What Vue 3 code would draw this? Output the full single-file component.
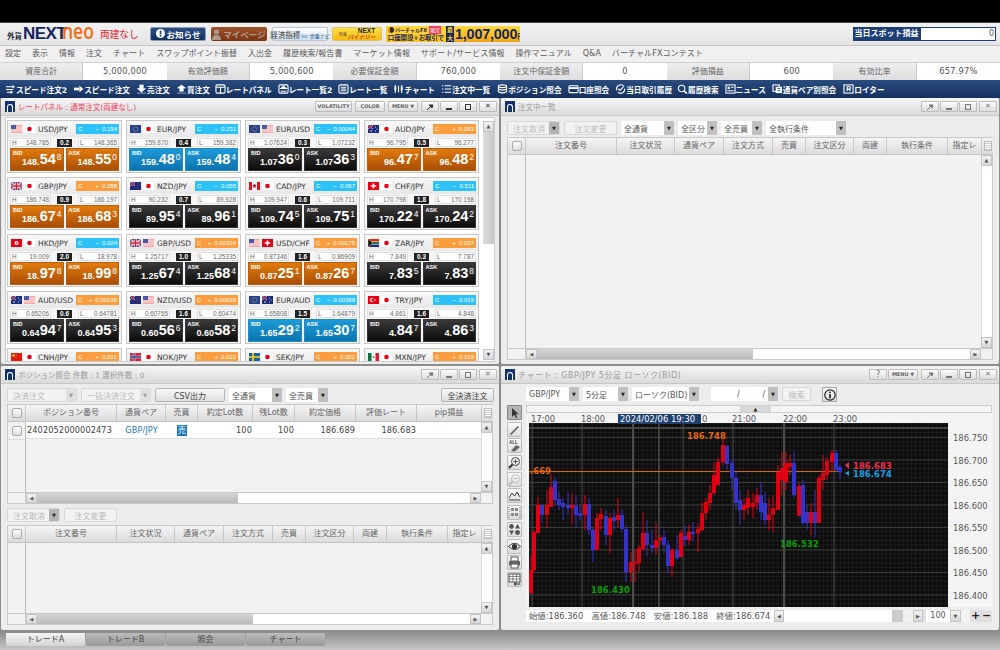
<template>
    <div class="app">
        <div class="topblack"></div>

        <div class="header">
            <div class="logo">
                <span class="logo-small">外貨</span><span class="logo-next">NEXT</span><span class="logo-neo">neo</span>
            </div>
            <span class="logo-mode">両建なし</span>
            <div class="hbtn hbtn-info">
                <svg width="9" height="10" viewBox="0 0 9 10"><circle cx="4.5" cy="4.5" r="4.5" fill="#fff" /><rect x="3.7" y="1.5" width="1.6" height="4" fill="#1c3f78" /><rect x="3.7" y="6.2" width="1.6" height="1.5" fill="#1c3f78" /></svg>
                お知らせ
            </div>
            <div class="hbtn hbtn-my">
                <svg width="9" height="11" viewBox="0 0 9 11"><circle cx="4.5" cy="3" r="2.6" fill="#a89a90" /><path d="M0 11 Q0 6 4.5 6 Q9 6 9 11 Z" fill="#a89a90" /></svg>
                マイページ
            </div>
            <div class="hbtn hbtn-eco"><b>経済指標</b><small>for 慎重ナビ</small></div>
            <div class="hbtn hbtn-bin"><small>外貨</small><div class="bin-text"><span>NEXT</span><i>バイナリー</i></div></div>
            <div class="banner">
                <div class="banner-left">
                    <div class="banner-top"><span class="banner-dot"></span><i>バーチャルFX</i><em>限定</em></div>
                    <div class="banner-bottom">口座開設+お取引で</div>
                </div>
                <div class="banner-max">最大</div>
                <div class="banner-num">1,007,000<small>円</small></div>
            </div>
            <div class="spot">
                <span class="spot-label">当日スポット損益</span>
                <span class="spot-val">0</span>
            </div>
        </div>

        <div class="menu">
            <span v-for="m in menus" :key="m">{{ m }}</span>
        </div>

        <div class="stats">
            <template v-for="s in stats" :key="s[0]">
                <div class="stat-label">{{ s[0] }}</div>
                <div class="stat-val">{{ s[1] }}</div>
            </template>
        </div>

        <div class="toolbar">
            <div class="tool-item" v-for="t in tools" :key="t.name" :style="{ marginLeft: t.gap + 'px' }">
                <svg width="11" height="10" viewBox="0 0 12 11" v-html="t.icon"></svg>
                <span>{{ t.name }}</span>
            </div>
        </div>

        <div class="workspace">
            <!-- rate panel -->
            <section class="panel">
                <div class="title">
                    <span class="win-icon"><i></i></span>
                    <span class="title-text red">レートパネル : 通常注文(両建なし)</span>
                    <div class="title-btns">
                        <span class="tbtn txt w37">VOLATILITY</span>
                        <span class="tbtn txt w30">COLOR</span>
                        <span class="tbtn txt w30">MENU ▼</span>
                        <span class="tbtn"><svg width="8" height="8" viewBox="0 0 8 8"><path d="M1 7 L4 4 M3 2 L6 5 L7 2 Z" stroke="#333" fill="#333" /></svg></span>
                        <span class="tbtn"><i class="ic-min"></i></span>
                        <span class="tbtn"><i class="ic-max"></i></span>
                        <span class="tbtn close-x">✕</span>
                    </div>
                </div>
                <div class="rate-body">
                    <div class="rate-grid">
                        <div class="card" v-for="c in cards" :key="c.pair">
                            <div class="card-head">
                                <svg class="flag" viewBox="0 0 22 16" v-html="flags[c.f1]"></svg>
                                <svg class="flag" viewBox="0 0 22 16" v-html="flags[c.f2]"></svg>
                                <span class="pair">{{ c.pair }}</span>
                                <span class="chg" :class="c.up ? 'chg-up' : 'chg-down'">
                                    <span>C</span><span class="chg-sign">{{ c.up ? '+' : '−' }}</span><span>{{ c.chg }}</span>
                                </span>
                            </div>
                            <div class="hl">
                                <span class="hl-box"><b>H</b>{{ c.h }}</span>
                                <span class="spread">{{ c.sp }}</span>
                                <span class="hl-box"><b>L</b>{{ c.l }}</span>
                            </div>
                            <div class="quotes">
                                <div class="quote" :class="c.color" v-for="(q, i) in [c.bid, c.ask]" :key="i">
                                    <span class="q-label">{{ i === 0 ? 'BID' : 'ASK' }}</span>
                                    <div class="q-price">
                                        <span class="q-a">{{ q[0] }}</span><span class="q-b">{{ q[1] }}</span><span class="q-c">{{ q[2] }}</span>
                                    </div>
                                </div>
                            </div>
                        </div>
                    </div>
                    <div class="rate-scroll">
                        <span class="arrow-btn">▲</span>
                        <span class="rate-thumb"></span>
                        <span class="rate-track"></span>
                        <span class="arrow-btn">▼</span>
                    </div>
                </div>
            </section>

            <!-- order list panel -->
            <section class="panel">
                <div class="title">
                    <span class="win-icon"><i></i></span>
                    <span class="title-text">注文中一覧</span>
                    <div class="title-btns dim">
                        <span class="tbtn"><svg width="8" height="8" viewBox="0 0 8 8"><path d="M1 7 L4 4 M3 2 L6 5 L7 2 Z" stroke="#777" fill="#777" /></svg></span>
                        <span class="tbtn"><i class="ic-min"></i></span>
                        <span class="tbtn"><i class="ic-max"></i></span>
                        <span class="tbtn close-x">✕</span>
                    </div>
                </div>
                <div class="pad">
                    <div class="row-tools">
                        <span class="btn off split w53">注文取消<i class="drop dark">▼</i></span>
                        <span class="btn off w53">注文変更</span>
                        <span class="sel w53">全通貨<i>▼</i></span>
                        <span class="sel w39">全区分<i>▼</i></span>
                        <span class="sel w41">全売買<i>▼</i></span>
                        <span class="sel w80">全執行条件<i>▼</i></span>
                    </div>
                    <div class="tbl tall">
                        <div class="tbl-head">
                            <span class="tc first"><i class="check"></i></span>
                            <span class="tc" v-for="c in orderCols" :key="c[0]" :style="{ width: c[1] + 'px' }">{{ c[0] }}</span>
                            <span class="tc corner"><i class="lines"></i></span>
                        </div>
                        <div class="tbl-main">
                            <div class="tbl-left"></div>
                            <div class="tbl-rows"></div>
                            <div class="vscroll"><span class="arrow-btn">▲</span><span class="v-track"></span><span class="arrow-btn">▼</span></div>
                        </div>
                        <div class="hscroll">
                            <span class="h-blank"></span><span class="arrow-btn">◀</span>
                            <span class="h-thumb" style="width: 216px"></span><span class="h-track"></span>
                            <span class="arrow-btn">▶</span><span class="h-end"></span>
                        </div>
                    </div>
                </div>
            </section>

            <!-- position + order panel -->
            <section class="panel">
                <div class="title">
                    <span class="win-icon"><i></i></span>
                    <span class="title-text">ポジション照会 件数 : 1 選択件数 : 0</span>
                    <div class="title-btns dim">
                        <span class="tbtn"><svg width="8" height="8" viewBox="0 0 8 8"><path d="M1 7 L4 4 M3 2 L6 5 L7 2 Z" stroke="#777" fill="#777" /></svg></span>
                        <span class="tbtn"><i class="ic-min"></i></span>
                        <span class="tbtn"><i class="ic-max"></i></span>
                        <span class="tbtn close-x">✕</span>
                    </div>
                </div>
                <div class="pad tight">
                    <div class="row-tools">
                        <span class="btn off split w70">決済注文<i class="drop">▼</i></span>
                        <span class="btn off split w70">一括決済注文<i class="drop">▼</i></span>
                        <span class="btn w70">CSV出力</span>
                        <span class="sel w53">全通貨<i>▼</i></span>
                        <span class="sel w42">全売買<i>▼</i></span>
                        <span class="btn w53 push">全決済注文</span>
                    </div>
                    <div class="tbl short">
                        <div class="tbl-head">
                            <span class="tc first"><i class="check"></i></span>
                            <span class="tc" v-for="c in posCols" :key="c[0]" :style="{ width: c[1] + 'px' }">{{ c[0] }}</span>
                            <span class="tc corner"><i class="lines"></i></span>
                        </div>
                        <div class="tbl-main">
                            <div class="tbl-left">
                                <span class="left-cell"><i class="check"></i></span>
                            </div>
                            <div class="tbl-rows">
                                <div class="pos-row">
                                    <span class="pc" style="width: 91px">2402052000002473</span>
                                    <span class="pc link" style="width: 49px">GBP/JPY</span>
                                    <span class="pc mid" style="width: 32px"><b class="sell">売</b></span>
                                    <span class="pc num" style="width: 55px">100</span>
                                    <span class="pc num" style="width: 42px">100</span>
                                    <span class="pc num" style="width: 61px">186.689</span>
                                    <span class="pc num" style="width: 61px">186.683</span>
                                    <span class="pc" style="width: 65px"></span>
                                </div>
                            </div>
                            <div class="vscroll"><span class="arrow-btn">▲</span><span class="v-track"></span><span class="arrow-btn">▼</span></div>
                        </div>
                        <div class="hscroll">
                            <span class="h-blank"></span><span class="arrow-btn">◀</span>
                            <span class="h-thumb" style="width: 201px"></span><span class="h-track"></span>
                            <span class="arrow-btn">▶</span><span class="h-end"></span>
                        </div>
                    </div>
                    <div class="row-tools second">
                        <span class="btn off split w53">注文取消<i class="drop dark">▼</i></span>
                        <span class="btn off w53">注文変更</span>
                    </div>
                    <div class="tbl short">
                        <div class="tbl-head">
                            <span class="tc first"><i class="check"></i></span>
                            <span class="tc" v-for="c in orderCols" :key="c[0]" :style="{ width: c[1] + 'px' }">{{ c[0] }}</span>
                            <span class="tc corner"><i class="lines"></i></span>
                        </div>
                        <div class="tbl-main">
                            <div class="tbl-left"></div>
                            <div class="tbl-rows"></div>
                            <div class="vscroll"><span class="arrow-btn">▲</span><span class="v-track"></span><span class="arrow-btn">▼</span></div>
                        </div>
                        <div class="hscroll">
                            <span class="h-blank"></span><span class="arrow-btn">◀</span>
                            <span class="h-thumb" style="width: 216px"></span><span class="h-track"></span>
                            <span class="arrow-btn">▶</span><span class="h-end"></span>
                        </div>
                    </div>
                </div>
            </section>

            <!-- chart panel -->
            <section class="panel">
                <div class="title">
                    <span class="win-icon"><i></i></span>
                    <span class="title-text wide">チャート : GBP/JPY 5分足 ローソク(BID)</span>
                    <div class="title-btns dim">
                        <span class="tbtn">?</span>
                        <span class="tbtn txt w30">MENU ▼</span>
                        <span class="tbtn"><svg width="8" height="8" viewBox="0 0 8 8"><path d="M1 7 L4 4 M3 2 L6 5 L7 2 Z" stroke="#777" fill="#777" /></svg></span>
                        <span class="tbtn"><i class="ic-min"></i></span>
                        <span class="tbtn"><i class="ic-max"></i></span>
                        <span class="tbtn close-x">✕</span>
                    </div>
                </div>
                <div class="chart-body">
                    <div class="chart-tools">
                        <span class="sel w53">GBP/JPY<i>▼</i></span>
                        <span class="sel w45">5分足<i>▼</i></span>
                        <span class="sel w67">ローソク(BID)<i>▼</i></span>
                        <span class="sel date">/ &nbsp; &nbsp; &nbsp; &nbsp; /<i>▼</i></span>
                        <span class="btn off w29">検索</span>
                        <span class="info-btn"><svg width="12" height="12" viewBox="0 0 12 12"><circle cx="6" cy="6" r="5.2" fill="none" stroke="#222" stroke-width="1.2" /><rect x="5.2" y="2.6" width="1.6" height="1.5" fill="#222" /><rect x="5.2" y="5" width="1.6" height="4.4" fill="#222" /></svg></span>
                    </div>
                    <div class="chart-main">
                        <div class="side-tools">
                            <span class="side-btn" v-for="(s, i) in sideTools" :key="i" :class="{ pressed: i === 0 }">
                                <svg width="13" height="13" viewBox="0 0 13 13" v-html="s"></svg>
                            </span>
                        </div>
                        <div class="chart-wrap">
                            <div class="slider"><span class="slider-handle">▲</span></div>
                            <svg class="chart-svg" width="466" height="194" viewBox="526 413 466 194">
                                <defs>
                                    <pattern id="fine" x="529" y="423" width="4.2" height="4.5" patternUnits="userSpaceOnUse">
                                        <path d="M0 0 H4.2 M0 0 V4.5" stroke="#2a2a2a" stroke-width="0.8" fill="none" />
                                    </pattern>
                                    <clipPath id="plot-clip"><rect x="529" y="423" width="419" height="184" /></clipPath>
                                </defs>
                                <rect x="526" y="413" width="466" height="194" fill="#f4f4f4" />
                                <rect x="529" y="423" width="419" height="184" fill="#0d0d0d" />
                                <rect x="529" y="423" width="419" height="184" fill="url(#fine)" />
                                <rect x="529" y="427" width="419" height="2" fill="#444" />
                                <line v-for="y in hLines" :key="y" x1="529" x2="948" :y1="y" :y2="y" stroke="#3a3a3a" />
                                <line v-for="v in vLines" :key="v[0]" :x1="v[0]" :x2="v[0]" y1="423" y2="607" stroke="#4c4c4c" :stroke-width="v[1]" />
                                <line x1="529" x2="842" y1="471.5" y2="471.5" stroke="#d96a00" />
                                <g v-for="c in candles" :key="c[0]">
                                    <rect :x="c[0] - 0.5" :y="c[3]" width="1" :height="c[4] - c[3]" :fill="c[5] === 'r' ? '#e00012' : '#3434c8'" />
                                    <rect :x="c[0] - 2" :y="c[1]" width="4" :height="c[2] - c[1]" :fill="c[5] === 'r' ? '#e00012' : '#3434c8'" />
                                </g>
                                <path d="M849 462 L845 465 L849 469 Z" fill="#f0304a" />
                                <path d="M849 471 L845 473 L849 476 Z" fill="#19a0e8" />
                                <text class="ct" x="853" y="469" fill="#f0304a">186.683</text>
                                <text class="ct" x="853" y="477" fill="#19a0e8">186.674</text>
                                <text class="ct" x="687" y="439" fill="#e8660a">186.748</text>
                                <text class="ct" x="551" y="474" fill="#e8660a" text-anchor="end" clip-path="url(#plot-clip)">186.669</text>
                                <text class="ct" x="780" y="547" fill="#0aa00a">186.532</text>
                                <text class="ct" x="591" y="593" fill="#0aa00a">186.430</text>
                                <text class="ax" v-for="t in times" :key="t[0]" :x="t[1]" y="422">{{ t[0] }}</text>
                                <rect x="618" y="414" width="83" height="10" fill="#1f4170" />
                                <text class="ax" x="620" y="422" style="fill: #fff">2024/02/06 19:30</text>
                                <text class="ax" v-for="p in prices" :key="p[0]" x="953" :y="p[1]">{{ p[0] }}</text>
                            </svg>
                            <div class="status">
                                <div class="status-text">
                                    <span v-for="o in ohlc" :key="o">{{ o }}</span>
                                </div>
                                <span class="arrow-btn st-a">◀</span>
                                <span class="st-track"></span>
                                <span class="st-thumb"></span>
                                <span class="st-blank"></span>
                                <span class="arrow-btn st-a">▶</span>
                                <span class="st-num">100</span>
                                <span class="arrow-btn st-d">▼</span>
                                <span class="st-gap"></span>
                                <span class="st-pm">+</span>
                                <span class="st-pm">−</span>
                            </div>
                        </div>
                    </div>
                </div>
            </section>
        </div>

        <div class="tabs">
            <span class="tab active">トレードA</span>
            <span class="tab">トレードB</span>
            <span class="tab">照会</span>
            <span class="tab">チャート</span>
        </div>
    </div>
</template>

<script setup>
const menus = ['設定', '表示', '情報', '注文', 'チャート', 'スワップポイント振替', '入出金', '履歴検索/報告書', 'マーケット情報', 'サポート/サービス情報', '操作マニュアル', 'Q&A', 'バーチャルFXコンテスト'];

const stats = [
    ['資産合計', '5,000,000'],
    ['有効評価額', '5,000,600'],
    ['必要保証金額', '760,000'],
    ['注文中保証金額', '0'],
    ['評価損益', '600'],
    ['有効比率', '657.97%'],
];

const ohlc = ['始値:186.360', '高値:186.748', '安値:186.188', '終値:186.674'];

const w = 'fill="none" stroke="#fff" stroke-width="1.2"';
const tools = [
    { name: 'スピード注文2', gap: 5, icon: `<path d="M1 3 H8 M1 6 H9 M2 9 H7" ${w}/><path d="M8 1 L11 3 L8 5 Z M6 7 L9 9 L6 11 Z" fill="#fff"/>` },
    { name: 'スピード注文', gap: 6, icon: `<path d="M1 5.5 H7" stroke="#fff" stroke-width="3"/><path d="M7 2 L11.5 5.5 L7 9 Z" fill="#fff"/>` },
    { name: '売注文', gap: 6, icon: `<path d="M4 1 H8 V5 H10.5 L6 9 L1.5 5 H4 Z M1 10 H11" fill="#fff" stroke="#fff" stroke-width=".6"/>` },
    { name: '買注文', gap: 6, icon: `<path d="M4 8 H8 V4.5 H10.5 L6 1 L1.5 4.5 H4 Z M1 10 H11" fill="#fff" stroke="#fff" stroke-width=".6"/>` },
    { name: 'レートパネル', gap: 5, icon: `<rect x="1" y="1" width="10" height="9" rx="1.5" ${w}/><path d="M1 3.5 H11 M6 3.5 V10" ${w}/>` },
    { name: 'レート一覧2', gap: 6, icon: `<rect x="1" y="1" width="10" height="9" rx="1.5" ${w}/><path d="M3 8 H9 M3 5 L6 2.5 L9 5 Z" ${w}/>` },
    { name: 'レート一覧', gap: 6, icon: `<rect x="1" y="1" width="10" height="9" rx="1.5" ${w}/><path d="M3 3.5 H9 M3 5.5 H9 M3 7.5 H9" ${w}/>` },
    { name: 'チャート', gap: 6, icon: `<path d="M2.5 1 V10 M6 2 V9 M9.5 1 V10" ${w}/><rect x="1.5" y="3" width="2" height="4" fill="#fff"/><rect x="8.5" y="3" width="2" height="4" fill="#fff"/>` },
    { name: '注文中一覧', gap: 6, icon: `<path d="M1 2 H2.5 M1 5.5 H2.5 M1 9 H2.5 M4 2 H11 M4 5.5 H11 M4 9 H11" ${w}/>` },
    { name: 'ポジション照会', gap: 7, icon: `<ellipse cx="6" cy="2.5" rx="4.5" ry="1.5" ${w}/><path d="M1.5 2.5 V8.5 Q6 11 10.5 8.5 V2.5 M1.5 5.5 Q6 8 10.5 5.5" ${w}/>` },
    { name: '口座照会', gap: 6, icon: `<rect x="1" y="2" width="10" height="7.5" rx="1" ${w}/><path d="M1 4.5 H11" stroke="#fff" stroke-width="2"/>` },
    { name: '当日取引履歴', gap: 6, icon: `<path d="M2 7 A4.5 4.5 0 0 1 10 3 M10.5 5 A4.5 4.5 0 0 1 3 9" ${w}/><path d="M3.5 5 L5.5 7 L9 3.5" ${w}/>` },
    { name: '履歴検索', gap: 5, icon: `<circle cx="5" cy="5" r="3.6" ${w}/><path d="M7.5 7.5 L11 10.5" stroke="#fff" stroke-width="1.8"/>` },
    { name: 'ニュース', gap: 6, icon: `<rect x="1" y="1" width="10" height="9" ${w}/><rect x="2.8" y="3" width="2.5" height="2.5" fill="#fff"/><path d="M6.5 3.5 H9.5 M2.5 7.5 H9.5" ${w}/>` },
    { name: '通貨ペア別照会', gap: 6, icon: `<rect x="1" y="1" width="7" height="7" ${w}/><rect x="4" y="3" width="7" height="7" fill="#fff"/><path d="M6 5 H9 M6 7.5 H9" stroke="#1c3f78"/>` },
    { name: 'ロイター', gap: 7, icon: `<rect x="1" y="1" width="10" height="9" ${w}/><path d="M4.5 8 V3 H7 A1.3 1.3 0 0 1 7 5.6 H4.5 M6.5 5.6 L8 8" ${w}/>` },
];

const jp = '<rect width="22" height="16" fill="#fff"/><circle cx="11" cy="8" r="4.6" fill="#e60012"/>';
const flags = {
    us: '<rect width="22" height="16" fill="#f4a8a8"/><rect y="3" width="22" height="2" fill="#fbe0e0"/><rect y="7" width="22" height="2" fill="#fbe0e0"/><rect y="11" width="22" height="2" fill="#fbe0e0"/><rect width="10" height="8" fill="#4a5aa8"/>',
    jp,
    eu: '<rect width="22" height="16" fill="#24408e"/><circle cx="11" cy="8" r="4.4" fill="none" stroke="#f0d040" stroke-width="1.4" stroke-dasharray="1.4 1"/>',
    au: '<rect width="22" height="16" fill="#1a2c7c"/><path d="M0 0 L10 8 M10 0 L0 8" stroke="#fff" stroke-width="1.4"/><path d="M5 0 V8 M0 4 H10" stroke="#d81e30" stroke-width="1.6"/><circle cx="15" cy="4" r="1" fill="#fff"/><circle cx="18" cy="8" r="1" fill="#fff"/><circle cx="15" cy="12" r="1" fill="#fff"/><circle cx="6" cy="12" r="1.6" fill="#fff"/>',
    gb: '<rect width="22" height="16" fill="#1f3a8c"/><path d="M0 0 L22 16 M22 0 L0 16" stroke="#fff" stroke-width="3"/><path d="M0 0 L22 16 M22 0 L0 16" stroke="#d81e30"/><path d="M11 0 V16 M0 8 H22" stroke="#fff" stroke-width="5"/><path d="M11 0 V16 M0 8 H22" stroke="#d81e30" stroke-width="3"/>',
    nz: '<rect width="22" height="16" fill="#1a2c7c"/><path d="M0 0 L10 8 M10 0 L0 8" stroke="#fff" stroke-width="1.4"/><path d="M5 0 V8 M0 4 H10" stroke="#d81e30" stroke-width="1.6"/><circle cx="16" cy="3" r="1" fill="#e03040"/><circle cx="19" cy="7" r="1" fill="#e03040"/><circle cx="14" cy="8" r="1" fill="#e03040"/><circle cx="16" cy="13" r="1" fill="#e03040"/>',
    ca: '<rect width="22" height="16" fill="#fff"/><rect width="6" height="16" fill="#e01020"/><rect x="16" width="6" height="16" fill="#e01020"/><path d="M11 3 L13 6 L15 6 L13.5 9 L14 11 H8 L8.5 9 L7 6 L9 6 Z" fill="#e01020"/>',
    ch: '<rect width="22" height="16" fill="#e60012"/><path d="M11 3 V13 M5.5 8 H16.5" stroke="#fff" stroke-width="3.4"/>',
    hk: '<rect width="22" height="16" fill="#e60012"/><circle cx="11" cy="8" r="4" fill="#fff"/><circle cx="11" cy="8" r="1.6" fill="#e60012"/>',
    za: '<rect width="22" height="16" fill="#fff"/><rect width="22" height="5" fill="#e03020"/><rect y="11" width="22" height="5" fill="#1c2c90"/><path d="M0 0 L10 8 L0 16 Z" fill="#111" stroke="#f0c020"/><path d="M9 8 H22" stroke="#108040" stroke-width="4"/>',
    tr: '<rect width="22" height="16" fill="#e60012"/><circle cx="8.5" cy="8" r="4.4" fill="#fff"/><circle cx="10" cy="8" r="3.5" fill="#e60012"/><circle cx="14" cy="8" r="1.5" fill="#fff"/>',
    cn: '<rect width="22" height="16" fill="#e01a10"/><circle cx="5" cy="5" r="2.6" fill="#f8d820"/><circle cx="10" cy="2.5" r=".8" fill="#f8d820"/><circle cx="11" cy="5" r=".8" fill="#f8d820"/><circle cx="10" cy="8" r=".8" fill="#f8d820"/>',
    no: '<rect width="22" height="16" fill="#d81e30"/><path d="M8 0 V16 M0 8 H22" stroke="#fff" stroke-width="5"/><path d="M8 0 V16 M0 8 H22" stroke="#1f3a8c" stroke-width="2.6"/>',
    se: '<rect width="22" height="16" fill="#1a62a8"/><path d="M8 0 V16 M0 8 H22" stroke="#f8d020" stroke-width="3.4"/>',
    mx: '<rect width="22" height="16" fill="#fff"/><rect width="7" height="16" fill="#0a7040"/><rect x="15" width="7" height="16" fill="#d81e30"/><circle cx="11" cy="8" r="2" fill="#8a6a30"/>',
};

const cards = [
    { pair: 'USD/JPY', f1: 'us', f2: 'jp', up: false, chg: '0.154', h: '148.785', sp: '0.2', l: '148.365', bid: ['148.', '54', '8'], ask: ['148.', '55', '0'], color: 'orange' },
    { pair: 'EUR/JPY', f1: 'eu', f2: 'jp', up: false, chg: '0.231', h: '159.870', sp: '0.4', l: '159.382', bid: ['159.', '48', '0'], ask: ['159.', '48', '4'], color: 'blue' },
    { pair: 'EUR/USD', f1: 'eu', f2: 'us', up: false, chg: '0.00044', h: '1.07624', sp: '0.3', l: '1.07232', bid: ['1.07', '36', '0'], ask: ['1.07', '36', '3'], color: 'black' },
    { pair: 'AUD/JPY', f1: 'au', f2: 'jp', up: true, chg: '0.083', h: '96.795', sp: '0.5', l: '96.277', bid: ['96.', '47', '7'], ask: ['96.', '48', '2'], color: 'orange' },
    { pair: 'GBP/JPY', f1: 'gb', f2: 'jp', up: true, chg: '0.288', h: '186.748', sp: '0.9', l: '186.197', bid: ['186.', '67', '4'], ask: ['186.', '68', '3'], color: 'orange' },
    { pair: 'NZD/JPY', f1: 'nz', f2: 'jp', up: false, chg: '0.055', h: '90.232', sp: '0.7', l: '89.928', bid: ['89.', '95', '4'], ask: ['89.', '96', '1'], color: 'black' },
    { pair: 'CAD/JPY', f1: 'ca', f2: 'jp', up: false, chg: '0.067', h: '109.947', sp: '0.6', l: '109.711', bid: ['109.', '74', '5'], ask: ['109.', '75', '1'], color: 'black' },
    { pair: 'CHF/JPY', f1: 'ch', f2: 'jp', up: false, chg: '0.511', h: '170.798', sp: '1.8', l: '170.198', bid: ['170.', '22', '4'], ask: ['170.', '24', '2'], color: 'black' },
    { pair: 'HKD/JPY', f1: 'hk', f2: 'jp', up: false, chg: '0.024', h: '19.009', sp: '2.0', l: '18.978', bid: ['18.', '97', '8'], ask: ['18.', '99', '8'], color: 'orange' },
    { pair: 'GBP/USD', f1: 'gb', f2: 'us', up: true, chg: '0.00334', h: '1.25717', sp: '1.0', l: '1.25335', bid: ['1.25', '67', '4'], ask: ['1.25', '68', '4'], color: 'black' },
    { pair: 'USD/CHF', f1: 'us', f2: 'ch', up: true, chg: '0.00175', h: '0.87346', sp: '1.6', l: '0.86909', bid: ['0.87', '25', '1'], ask: ['0.87', '26', '7'], color: 'orange' },
    { pair: 'ZAR/JPY', f1: 'za', f2: 'jp', up: true, chg: '0.037', h: '7.849', sp: '0.3', l: '7.787', bid: ['7.', '83', '5'], ask: ['7.', '83', '8'], color: 'black' },
    { pair: 'AUD/USD', f1: 'au', f2: 'us', up: true, chg: '0.00138', h: '0.65206', sp: '0.6', l: '0.64781', bid: ['0.64', '94', '7'], ask: ['0.64', '95', '3'], color: 'black' },
    { pair: 'NZD/USD', f1: 'nz', f2: 'us', up: true, chg: '0.00028', h: '0.60765', sp: '1.6', l: '0.60474', bid: ['0.60', '56', '6'], ask: ['0.60', '58', '2'], color: 'black' },
    { pair: 'EUR/AUD', f1: 'eu', f2: 'au', up: false, chg: '0.00388', h: '1.65808', sp: '1.5', l: '1.64879', bid: ['1.65', '29', '2'], ask: ['1.65', '30', '7'], color: 'blue' },
    { pair: 'TRY/JPY', f1: 'tr', f2: 'jp', up: false, chg: '0.015', h: '4.861', sp: '1.6', l: '4.848', bid: ['4.', '84', '7'], ask: ['4.', '86', '3'], color: 'black' },
    { pair: 'CNH/JPY', f1: 'cn', f2: 'jp', up: true, chg: '0.031', h: '20.590', sp: '1.0', l: '20.520', bid: ['20.', '55', '0'], ask: ['20.', '56', '0'], color: 'black' },
    { pair: 'NOK/JPY', f1: 'no', f2: 'jp', up: true, chg: '0.022', h: '14.100', sp: '1.0', l: '14.020', bid: ['14.', '05', '0'], ask: ['14.', '06', '0'], color: 'black' },
    { pair: 'SEK/JPY', f1: 'se', f2: 'jp', up: true, chg: '0.002', h: '14.200', sp: '1.0', l: '14.120', bid: ['14.', '15', '0'], ask: ['14.', '16', '0'], color: 'black' },
    { pair: 'MXN/JPY', f1: 'mx', f2: 'jp', up: true, chg: '0.018', h: '8.700', sp: '1.0', l: '8.640', bid: ['8.', '67', '0'], ask: ['8.', '68', '0'], color: 'black' },
];

const orderCols = [['注文番号', 91], ['注文状況', 58], ['通貨ペア', 49], ['注文方式', 49], ['売買', 33], ['注文区分', 48], ['両建', 33], ['執行条件', 61], ['指定レ', 34]];
const posCols = [['ポジション番号', 91], ['通貨ペア', 49], ['売買', 32], ['約定Lot数', 55], ['残Lot数', 42], ['約定価格', 61], ['評価レート', 61], ['pip損益', 65]];

const g = 'fill="none" stroke="#444" stroke-width="1"';
const sideTools = [
    '<path d="M4 2 L4 11 L6.2 8.8 L8 12 L9.3 11.2 L7.6 8.2 L10.5 8 Z" fill="#333"/>',
    '<path d="M2 11 L10 3 L11 4 L3 12 Z" fill="#555"/>',
    '<text x="1" y="5" font-size="4.5" font-weight="700" font-family="Liberation Sans" fill="#444">ALL</text><path d="M3 12 L8 6 L12 8 L7 12.5 Z" fill="#666"/>',
    `<circle cx="7.5" cy="5.5" r="4" ${g}/><path d="M5.5 5.5 H9.5 M7.5 3.5 V7.5" ${g}/><path d="M4.5 8.5 L1 12" stroke="#333" stroke-width="2"/>`,
    '<circle cx="7.5" cy="5.5" r="4" fill="none" stroke="#bbb"/><path d="M5.5 5.5 H9.5" stroke="#bbb"/><path d="M4.5 8.5 L1 12" stroke="#bbb" stroke-width="2"/>',
    `<path d="M1 11 H12 M1 9 L4 4 L6.5 7 L9 3 L12 8" ${g}/>`,
    '<path d="M1 1 V12 M12 1 V12" stroke="#666" stroke-dasharray="1 1"/><rect x="3" y="2" width="3" height="3" fill="#888"/><rect x="7" y="2" width="3" height="3" fill="#888"/><rect x="3" y="7" width="3" height="3" fill="#888"/><rect x="7" y="7" width="3" height="3" fill="#888"/>',
    '<circle cx="3.5" cy="3.5" r="2.4" fill="#555"/><path d="M9.5 .8 L12 5.5 H7 Z" fill="#555"/><path d="M1 7.5 H6 L3.5 12 Z" fill="#555"/><circle cx="9.5" cy="9.5" r="2.4" fill="#555"/>',
    '<path d="M.5 6.5 Q6.5 0 12.5 6.5 Q6.5 12.5 .5 6.5 Z" fill="none" stroke="#333"/><circle cx="6.5" cy="6.5" r="2.6" fill="#333"/>',
    '<rect x="3" y="1" width="7" height="4" fill="#fff" stroke="#555"/><rect x="1" y="5" width="11" height="4.5" fill="#666"/><rect x="3" y="8" width="7" height="4" fill="#fff" stroke="#555"/>',
    '<rect x="1" y="1" width="11" height="8" fill="#fff" stroke="#444"/><path d="M1 3.5 H12 M1 6 H12 M5 1 V9 M8.5 1 V9" stroke="#444" stroke-width=".6"/><path d="M6 11 H12 M8 9.5 L6 11 L8 12.5" stroke="#222" fill="none"/>',
];

const hLines = [437.5, 460, 482.5, 505, 527.5, 550, 572.5, 595];
const vLines = [[532, 1], [582, 1], [633, 2], [659, 1.5], [683, 1], [733, 1], [784, 2], [834, 1]];
// 19:00 and most of 20:00 sit behind the crosshair time tag
const times = [['17:00', 531], ['18:00', 581], ['0', 702], ['21:00', 732], ['22:00', 783], ['23:00', 833]];
const prices = [['186.750', 441], ['186.700', 463.5], ['186.650', 486], ['186.600', 508.5], ['186.550', 531], ['186.500', 553.5], ['186.450', 576], ['186.400', 598.5]];

// x, body top, body bottom, wick top, wick bottom, colour (read off the picture)
const candles = [
    [531, 570, 593, 555, 594, 'r'], [534, 532, 570, 530, 572, 'r'], [538, 505, 533, 497, 533, 'r'], [542, 505, 515, 505, 523, 'b'],
    [547, 505, 515, 490, 528, 'r'], [551, 487, 507, 474, 507, 'r'], [555, 481, 500, 478, 505, 'b'], [559, 499, 505, 492, 510, 'b'],
    [563, 503, 507, 498, 520, 'b'], [568, 505, 508, 492, 515, 'b'], [572, 505, 508, 493, 525, 'r'], [576, 506, 515, 495, 527, 'b'],
    [580, 513, 516, 505, 520, 'b'], [585, 504, 515, 495, 530, 'r'], [589, 504, 530, 498, 535, 'b'], [593, 530, 550, 528, 562, 'b'],
    [597, 518, 550, 513, 550, 'r'], [601, 514, 519, 508, 530, 'r'], [606, 516, 535, 510, 545, 'b'], [610, 518, 535, 513, 553, 'r'],
    [614, 517, 521, 510, 530, 'b'], [618, 515, 520, 498, 527, 'r'], [622, 515, 529, 510, 532, 'b'], [626, 529, 572, 525, 582, 'b'],
    [631, 562, 572, 552, 582, 'r'], [635, 562, 564, 550, 582, 'r'], [639, 548, 563, 545, 572, 'r'], [643, 533, 549, 512, 550, 'r'],
    [647, 533, 545, 520, 556, 'b'], [652, 545, 548, 530, 553, 'b'], [656, 540, 548, 523, 555, 'r'], [660, 538, 540, 535, 545, 'r'],
    [664, 537, 545, 530, 553, 'b'], [668, 545, 566, 540, 573, 'b'], [672, 550, 566, 548, 577, 'r'], [677, 550, 558, 535, 560, 'b'],
    [681, 533, 557, 530, 557, 'r'], [685, 536, 540, 525, 546, 'b'], [689, 532, 540, 525, 545, 'r'], [693, 532, 534, 522, 542, 'b'],
    [698, 529, 533, 523, 552, 'r'], [702, 513, 530, 502, 532, 'r'], [706, 502, 513, 498, 520, 'r'], [710, 493, 503, 485, 510, 'r'],
    [714, 475, 493, 462, 495, 'r'], [718, 462, 485, 458, 486, 'r'], [723, 445, 462, 439, 465, 'r'], [727, 446, 464, 445, 470, 'b'],
    [732, 463, 478, 460, 490, 'b'], [736, 478, 503, 470, 510, 'b'], [740, 500, 510, 490, 525, 'b'], [744, 505, 510, 498, 520, 'r'],
    [748, 498, 508, 490, 515, 'r'], [753, 503, 507, 493, 518, 'r'], [757, 495, 503, 488, 510, 'r'], [761, 495, 512, 482, 520, 'b'],
    [765, 503, 520, 492, 525, 'b'], [769, 515, 520, 498, 530, 'r'], [773, 508, 515, 495, 532, 'r'], [778, 472, 510, 465, 510, 'r'],
    [782, 468, 480, 452, 495, 'r'], [786, 463, 482, 452, 490, 'r'], [790, 463, 467, 455, 475, 'r'], [794, 463, 495, 452, 498, 'b'],
    [799, 486, 516, 483, 516, 'r'], [803, 485, 523, 480, 525, 'b'], [807, 512, 523, 505, 530, 'b'], [811, 512, 523, 503, 535, 'r'],
    [815, 512, 523, 490, 537, 'b'], [819, 478, 523, 475, 523, 'r'], [823, 473, 480, 455, 490, 'r'], [827, 461, 475, 457, 480, 'r'],
    [832, 453, 462, 450, 472, 'r'], [836, 453, 470, 450, 472, 'b'], [840, 467, 472, 465, 479, 'b'],
];
</script>

<style>
html,
body {
    margin: 0;
    background: #000;
}
</style>

<style scoped>
.app {
    width: 1000px;
    height: 650px;
    display: flex;
    flex-direction: column;
    overflow: hidden;
    font-family: "DejaVu Sans", "Noto Sans CJK JP", sans-serif;
    font-size: 8px;
    color: #555;
    background: #8c8c8c;
}

.topblack {
    height: 22px;
    flex: none;
    background: #000;
    border-bottom: 1px solid #444;
}

/* header */
.header {
    height: 23px;
    flex: none;
    box-sizing: border-box;
    display: flex;
    align-items: center;
    background: linear-gradient(#f2f2f2, #e4e4e4);
    border-bottom: 1px solid #c4c4c4;
    padding-left: 7px;
}

.logo {
    display: flex;
    align-items: baseline;
    width: 88px;
    flex: none;
}

.logo-small {
    font-size: 7.5px;
    font-weight: 700;
    color: #223;
    width: 16px;
}

.logo-next {
    font-family: "Liberation Sans", sans-serif;
    font-size: 17px;
    font-weight: 700;
    color: #14265e;
    letter-spacing: -0.6px;
    width: 39px;
}

.logo-neo {
    display: inline-block;
    font-family: "Open Sans", sans-serif;
    font-size: 17.5px;
    font-weight: 600;
    color: #f26a10;
    line-height: 17px;
    transform: scaleY(1.25);
    transform-origin: 50% 80%;
}

.logo-mode {
    font-size: 9.7px;
    color: #e0202a;
    margin-left: 5px;
    width: 50px;
    flex: none;
    white-space: nowrap;
}

.hbtn {
    height: 14px;
    width: 56px;
    flex: none;
    box-sizing: border-box;
    margin-right: 5px;
    border-radius: 2px;
    display: flex;
    align-items: center;
    justify-content: center;
    gap: 2px;
    font-weight: 700;
    font-size: 8.5px;
    white-space: nowrap;
}

.hbtn-info {
    background: linear-gradient(#2c4f88, #10305f);
    color: #fff;
    border: 1px solid #8a9ab8;
}

.hbtn-my {
    background: linear-gradient(#a0522a, #7c3410);
    color: #b09a8c;
}

.hbtn-eco {
    background: linear-gradient(#fff, #cfe2f4);
    border: 1px solid #b8c4d0;
    color: #555;
    font-size: 7.5px;
    font-weight: 400;
    align-items: center;
    gap: 1px;
}

.hbtn-eco b {
    font-weight: 500;
}

.hbtn-eco small {
    font-size: 5px;
    color: #2c5a90;
    margin-top: 3px;
}

.hbtn-bin {
    width: 50px;
    margin-left: -1px;
    background: linear-gradient(#ffe14a, #f7b90c);
    border: 1px solid #d8c070;
    color: #223;
    gap: 1px;
}

.hbtn-bin small {
    font-size: 4px;
    font-weight: 400;
}

.bin-text {
    display: flex;
    flex-direction: column;
    align-items: flex-end;
    line-height: 6px;
}

.bin-text span {
    font-family: "Liberation Sans", sans-serif;
    font-size: 6.5px;
    color: #223;
}

.bin-text i {
    font-size: 5.5px;
    color: #c8401a;
}

.banner {
    width: 134px;
    height: 16px;
    flex: none;
    margin-left: -1px;
    display: flex;
    background: linear-gradient(#ffd83c, #f4a818);
    overflow: hidden;
}

.banner-left {
    width: 60px;
    flex: none;
    display: flex;
    flex-direction: column;
}

.banner-top {
    height: 8px;
    display: flex;
    align-items: center;
    gap: 1px;
    padding-left: 2px;
    font-size: 5px;
    color: #223;
    background: #ffd23c;
    line-height: 8px;
}

.banner-top i {
    font-style: normal;
    font-weight: 700;
}

.banner-top em {
    font-style: normal;
    color: #fff;
    background: #e84060;
    padding: 0 1px;
    margin-left: 1px;
}

.banner-dot {
    width: 6px;
    height: 6px;
    border-radius: 3px;
    background: #223;
    border-left: 2px solid #f08020;
    box-sizing: border-box;
}

.banner-bottom {
    height: 8px;
    font-size: 6.4px;
    font-weight: 700;
    line-height: 8px;
    text-align: center;
    white-space: nowrap;
    background: #ffc820;
    color: #14265e;
}

.banner-max {
    width: 8px;
    flex: none;
    background: #14265e;
    color: #ffd23c;
    font-size: 6px;
    line-height: 8px;
    font-weight: 700;
    text-align: center;
}

.banner-num {
    font-family: "Liberation Sans", sans-serif;
    font-size: 14.4px;
    font-weight: 700;
    color: #14265e;
    line-height: 16px;
    padding-left: 1px;
    white-space: nowrap;
    letter-spacing: -0.2px;
}

.banner-num small {
    font-size: 6.5px;
    font-family: "Noto Sans CJK JP", sans-serif;
}

.spot {
    margin-left: auto;
    margin-right: 4px;
    display: flex;
    height: 14px;
}

.spot-label {
    width: 67px;
    background: #1c3f78;
    color: #fff;
    font-weight: 700;
    font-size: 8px;
    line-height: 14px;
    text-align: center;
    white-space: nowrap;
}

.spot-val {
    width: 76px;
    box-sizing: border-box;
    background: #fff;
    border: 1px solid #1c3f78;
    font-size: 8px;
    line-height: 12px;
    text-align: right;
    padding-right: 1px;
}

/* menu */
.menu {
    height: 17px;
    flex: none;
    box-sizing: border-box;
    display: flex;
    gap: 10.8px;
    padding-left: 5px;
    background: #f0f0f0;
    border-bottom: 1px solid #d0d0d0;
    white-space: nowrap;
    color: #5a5a5a;
    line-height: 16px;
    letter-spacing: 0.1px;
}

/* stats */
.stats {
    height: 17px;
    flex: none;
    display: grid;
    grid-template-columns: repeat(12, 1fr);
    background: #ddd;
}

.stat-label {
    background: linear-gradient(#eee, #ddd);
    border-right: 1px solid #ccc;
    text-align: center;
    line-height: 17px;
    color: #666;
}

.stat-val {
    background: #fff;
    text-align: center;
    line-height: 17px;
    font-size: 8.3px;
    letter-spacing: 0.2px;
    color: #555;
}

/* toolbar */
.toolbar {
    height: 18px;
    flex: none;
    box-sizing: border-box;
    display: flex;
    align-items: center;
    background: linear-gradient(#2a4c80, #14305e);
    color: #fff;
    font-weight: 700;
    font-size: 7.65px;
    white-space: nowrap;
}

.tool-item {
    display: flex;
    align-items: center;
}

/* workspace */
.workspace {
    height: 534px;
    flex: none;
    display: grid;
    grid-template-columns: 498px 498px;
    grid-template-rows: 266px 264px;
    gap: 2px;
    padding-left: 1px;
    background: #8c8c8c;
}

.panel {
    background: #ececec;
    display: flex;
    flex-direction: column;
    min-width: 0;
    overflow: hidden;
    border-radius: 2px;
}

.title {
    height: 18px;
    flex: none;
    box-sizing: border-box;
    display: flex;
    align-items: center;
    padding: 0 2px 0 4px;
    background: linear-gradient(#f6f6f6, #dadada);
    border-bottom: 1px solid #c8c8c8;
}

.win-icon {
    width: 10px;
    height: 11px;
    background: #12336a;
    display: flex;
    align-items: flex-end;
    justify-content: center;
    flex: none;
}

.win-icon i {
    width: 4px;
    height: 7px;
    border: 1.5px solid #fff;
    border-bottom: none;
    border-radius: 3px 3px 0 0;
}

.title-text {
    margin-left: 3px;
    color: #999;
    white-space: nowrap;
    font-size: 7.5px;
}

.title-text.red {
    color: #f0405a;
}

.title-text.wide {
    font-size: 8px;
    letter-spacing: 0.5px;
}

.title-btns {
    margin-left: auto;
    display: flex;
    gap: 1px;
}

.tbtn {
    width: 18px;
    height: 11px;
    box-sizing: border-box;
    background: linear-gradient(#fcfcfc, #dcdcdc);
    border: 1px solid #bdbdbd;
    border-radius: 1px;
    display: flex;
    align-items: center;
    justify-content: center;
    color: #666;
    white-space: nowrap;
    font-size: 8px;
    line-height: 9px;
}

.tbtn.txt {
    font-size: 5px;
    font-weight: 700;
    margin-right: 2px;
}

.tbtn.w37 {
    width: 37px;
}

.tbtn.w30 {
    width: 30px;
}

.ic-min {
    width: 6px;
    height: 1.5px;
    background: #333;
    margin-top: 5px;
}

.ic-max {
    width: 6px;
    height: 6px;
    box-sizing: border-box;
    border: 1px solid #333;
    border-top-width: 1.5px;
}

.close-x {
    color: #333;
    font-size: 7px;
    margin-left: 1px;
}

.dim .close-x {
    color: #777;
}

.dim .ic-min {
    background: #777;
}

.dim .ic-max {
    border-color: #777;
}

/* rate panel */
.rate-body {
    flex: 1;
    min-height: 0;
    display: flex;
    margin: 1px 4px 2px 4px;
    background: #fff;
    border: 1px solid #ccc;
    box-sizing: border-box;
}

.rate-grid {
    width: 477px;
    flex: none;
    box-sizing: border-box;
    padding: 2px 0 0 1px;
    display: grid;
    grid-template-columns: repeat(4, 115px);
    grid-auto-rows: 53px;
    gap: 4px;
    overflow: hidden;
}

.card {
    box-sizing: border-box;
    border: 1px solid #c8c8c8;
    background: #f6f6f6;
    padding: 0 2px;
    display: flex;
    flex-direction: column;
}

.card-head {
    height: 16px;
    flex: none;
    display: flex;
    align-items: center;
    background: linear-gradient(#f8f8f8, #e8e8e8);
    margin: 0 -2px;
    padding: 0 2px 0 3px;
}

.flag {
    width: 11px;
    height: 8px;
    flex: none;
    margin-right: 2px;
}

.pair {
    color: #333;
    font-size: 7.5px;
    margin-left: 1px;
    white-space: nowrap;
}

.chg {
    margin-left: auto;
    width: 43px;
    height: 10px;
    box-sizing: border-box;
    padding: 0 2px;
    display: flex;
    align-items: center;
    font-size: 6px;
    color: #fff;
    font-family: "Liberation Sans", sans-serif;
    flex: none;
}

.chg-sign {
    margin-left: auto;
    margin-right: 3px;
}

.chg-up {
    background: #fb9d3c;
}

.chg-down {
    background: #2cc2f8;
}

.hl {
    height: 9px;
    margin-top: 1px;
    flex: none;
    display: flex;
    justify-content: space-between;
    align-items: center;
}

.hl-box {
    width: 41px;
    height: 9px;
    box-sizing: border-box;
    background: #fff;
    border: 1px solid #e0e0e0;
    font-family: "Liberation Sans", sans-serif;
    font-size: 6.4px;
    line-height: 7px;
    text-align: right;
    padding: 0 1px;
    color: #666;
    display: flex;
    justify-content: space-between;
}

.hl-box b {
    font-weight: 400;
}

.spread {
    width: 15px;
    height: 8px;
    background: #222;
    color: #fff;
    font-family: "Liberation Sans", sans-serif;
    font-size: 6.4px;
    font-weight: 700;
    line-height: 8px;
    text-align: center;
}

.quotes {
    margin-top: 1px;
    flex: 1;
    display: flex;
    gap: 2px;
    min-height: 0;
}

.quote {
    flex: 1;
    box-sizing: border-box;
    border: 1px solid #aaa;
    position: relative;
    color: #fff;
    font-family: "Liberation Sans", sans-serif;
    font-weight: 700;
    height: 23px;
}

.quote.orange {
    background: linear-gradient(#e27a0c, #a94e06);
    border-color: #b85c10;
}

.quote.blue {
    background: linear-gradient(#1c9ad8, #0a74b0);
    border-color: #2a8ac0;
}

.quote.black {
    background: linear-gradient(#3a3a3a, #0c0c0c);
    border-color: #333;
}

.q-label {
    font-size: 5.5px;
    margin-left: 2px;
    line-height: 8px;
    display: block;
}

.q-price {
    position: absolute;
    right: 1px;
    bottom: 1px;
    display: flex;
    align-items: flex-start;
    line-height: 14px;
    white-space: nowrap;
}

.q-a {
    font-size: 9px;
    margin-top: 3px;
}

.q-b {
    font-size: 14.5px;
}

.q-c {
    font-size: 8.5px;
    line-height: 10px;
    margin-left: 1px;
    font-weight: 400;
}

.rate-scroll {
    width: 11px;
    display: flex;
    flex-direction: column;
    flex: none;
    padding-top: 3px;
    margin-bottom: 1px;
}

.arrow-btn {
    width: 11px;
    height: 11px;
    flex: none;
    box-sizing: border-box;
    background: linear-gradient(#f4f4f4, #d8d8d8);
    border: 1px solid #c4c4c4;
    font-size: 5px;
    line-height: 9px;
    text-align: center;
    color: #555;
}

.rate-thumb {
    height: 112px;
    flex: none;
    background: linear-gradient(90deg, #dcdcdc, #c8c8c8);
}

.rate-track {
    flex: 1;
    background: #fff;
}

/* tables */
.pad {
    padding: 5px 5px 0 6px;
    flex: 1;
    min-height: 0;
    display: flex;
    flex-direction: column;
}

.pad.tight {
    padding-top: 4px;
}

.row-tools {
    height: 14px;
    flex: none;
    display: flex;
    gap: 4px;
    margin-bottom: 2px;
}

.row-tools.second {
    margin: 4px 0 3px;
}

.btn {
    height: 14px;
    box-sizing: border-box;
    display: flex;
    align-items: center;
    justify-content: center;
    background: linear-gradient(#fafafa, #dedede);
    border: 1px solid #b4b4b4;
    border-radius: 2px;
    color: #444;
    white-space: nowrap;
}

.btn.off {
    color: #bbb;
    background: #f2f2f2;
    border-color: #d8d8d8;
}

.btn.split {
    justify-content: flex-start;
    padding-left: 5px;
    position: relative;
}

.drop {
    position: absolute;
    right: 0;
    top: 0;
    width: 10px;
    height: 12px;
    background: #e0e0e0;
    font-style: normal;
    font-size: 5px;
    line-height: 12px;
    text-align: center;
    color: #999;
}

.drop.dark {
    background: #b4b4b4;
    color: #222;
}

.push {
    margin-left: auto;
}

.w29 {
    width: 29px;
}

.w39 {
    width: 39px;
}

.w41 {
    width: 41px;
}

.w42 {
    width: 42px;
}

.w45 {
    width: 45px;
}

.w53 {
    width: 53px;
}

.w67 {
    width: 67px;
}

.w70 {
    width: 70px;
}

.w80 {
    width: 80px;
}

.sel {
    height: 14px;
    box-sizing: border-box;
    display: flex;
    align-items: center;
    justify-content: space-between;
    background: #fff;
    padding-left: 3px;
    color: #555;
    white-space: nowrap;
    overflow: hidden;
}

.sel i {
    width: 10px;
    height: 14px;
    flex: none;
    background: #c0c0c0;
    font-style: normal;
    font-size: 5px;
    line-height: 14px;
    text-align: center;
    color: #222;
}

.tbl {
    flex: none;
    width: 486px;
    display: flex;
    flex-direction: column;
    box-sizing: border-box;
    border: 1px solid #c8c8c8;
    background: #f2f2f2;
}

.tbl.tall {
    height: 223px;
}

.tbl.short {
    height: 100px;
}

.tbl-head {
    height: 17px;
    flex: none;
    box-sizing: border-box;
    display: flex;
    background: linear-gradient(#f4f4f4, #dcdcdc);
    border-bottom: 1px solid #c4c4c4;
    margin-right: -1px;
}

.tc {
    flex: none;
    box-sizing: border-box;
    border-right: 1px solid #c8c8c8;
    text-align: center;
    line-height: 16px;
    white-space: nowrap;
    overflow: hidden;
    color: #666;
}

.tc.first {
    width: 18px;
    display: flex;
    align-items: center;
    justify-content: center;
}

.tc.corner {
    width: 11px;
    display: flex;
    align-items: center;
    justify-content: center;
    border-right: none;
}

.check {
    width: 10px;
    height: 10px;
    box-sizing: border-box;
    border: 1px solid #aaa;
    border-radius: 2px;
    background: linear-gradient(#fff, #ddd);
    display: block;
}

.lines {
    width: 8px;
    height: 10px;
    box-sizing: border-box;
    border: 1px solid #bbb;
    background: repeating-linear-gradient(#fff 0, #fff 1px, #ccc 1px, #ccc 2px);
}

.tbl-main {
    flex: 1;
    min-height: 0;
    display: flex;
}

.tbl-left {
    width: 18px;
    flex: none;
    box-sizing: border-box;
    border-right: 1px solid #bbb;
    background: #f2f2f2;
}

.left-cell {
    height: 17px;
    display: flex;
    align-items: center;
    justify-content: center;
    border-bottom: 1px solid #ddd;
}

.tbl-rows {
    flex: 1;
    min-width: 0;
    background: #f2f2f2;
}

.pos-row {
    height: 17px;
    box-sizing: border-box;
    display: flex;
    background: #fff;
    border-bottom: 1px solid #ddd;
    line-height: 16px;
    font-size: 8.2px;
    color: #444;
}

.pc {
    flex: none;
    box-sizing: border-box;
    padding: 0 1px;
    white-space: nowrap;
    overflow: hidden;
    letter-spacing: 0.1px;
}

.pc.link {
    color: #2878b8;
    text-align: center;
}

.pc.mid {
    text-align: center;
}

.pc.num {
    text-align: right;
}

.sell {
    display: inline-block;
    width: 10px;
    height: 11px;
    line-height: 11px;
    background: #1c78b8;
    color: #fff;
    font-weight: 400;
}

.vscroll {
    width: 11px;
    flex: none;
    display: flex;
    flex-direction: column;
}

.v-track {
    flex: 1;
    background: #fff;
    border-left: 1px solid #ddd;
}

.hscroll {
    height: 11px;
    flex: none;
    display: flex;
    border-top: 1px solid #c8c8c8;
    box-sizing: border-box;
}

.h-blank {
    width: 18px;
    flex: none;
    border-right: 1px solid #ccc;
    box-sizing: border-box;
}

.hscroll .arrow-btn {
    height: 10px;
    line-height: 8px;
}

.h-thumb {
    flex: none;
    background: linear-gradient(#d4d4d4, #bcbcbc);
}

.h-track {
    flex: 1;
    background: #fff;
}

.h-end {
    width: 11px;
    flex: none;
}

/* chart */
.chart-body {
    flex: 1;
    min-height: 0;
    display: flex;
    flex-direction: column;
    padding-top: 3px;
}

.chart-tools {
    height: 14px;
    flex: none;
    display: flex;
    gap: 4px;
    padding-left: 25px;
    margin-bottom: 4px;
}

.sel.date {
    width: 67px;
    margin-left: 8px;
    justify-content: space-between;
    padding-left: 26px;
}

.info-btn {
    width: 15px;
    height: 15px;
    box-sizing: border-box;
    margin-left: 7px;
    background: linear-gradient(#fafafa, #ddd);
    border: 1px solid #aaa;
    display: flex;
    align-items: center;
    justify-content: center;
}

.chart-main {
    flex: 1;
    min-height: 0;
    display: flex;
    padding-left: 6px;
    gap: 3px;
}

.side-tools {
    width: 16px;
    flex: none;
    display: flex;
    flex-direction: column;
    gap: 1.7px;
}

.side-btn {
    width: 15px;
    height: 15px;
    box-sizing: border-box;
    background: linear-gradient(#fafafa, #dcdcdc);
    border: 1px solid #bbb;
    border-radius: 1px;
    display: flex;
    align-items: center;
    justify-content: center;
}

.side-btn.pressed {
    background: #b4b4b4;
    border-color: #888;
}

.chart-wrap {
    width: 466px;
    flex: none;
    display: flex;
    flex-direction: column;
}

.slider {
    height: 8px;
    flex: none;
    display: flex;
    justify-content: flex-end;
    padding-right: 220px;
    background: #f4f4f4;
    border: 1px solid #ccc;
    box-sizing: border-box;
}

.slider-handle {
    width: 31px;
    height: 6px;
    font-size: 5px;
    line-height: 6px;
    text-align: center;
    background: #d8d8d8;
    color: #222;
}

.chart-svg {
    display: block;
    flex: none;
}

.ct {
    font-family: "DejaVu Sans", sans-serif;
    font-size: 8.4px;
    font-weight: 700;
    letter-spacing: 0.1px;
}

.ax {
    font-family: "DejaVu Sans", sans-serif;
    font-size: 8.4px;
    fill: #555;
}

.status {
    margin-top: 3px;
    height: 12px;
    flex: none;
    display: flex;
    align-items: center;
    background: #e0e0e0;
}

.status-text {
    width: 248px;
    flex: none;
    box-sizing: border-box;
    height: 12px;
    line-height: 12px;
    background: #fff;
    padding-left: 3px;
    color: #555;
    font-size: 8.4px;
    white-space: nowrap;
    overflow: hidden;
    display: grid;
    grid-template-columns: repeat(4, 62.4px);
}

.st-a {
    height: 12px;
    width: 10px;
    line-height: 10px;
}

.st-track {
    width: 108px;
    height: 12px;
    background: #fff;
}

.st-thumb {
    width: 11px;
    height: 12px;
    background: #ccc;
}

.st-blank {
    width: 10px;
    height: 12px;
    background: #f2f2f2;
}

.st-num {
    width: 24px;
    height: 12px;
    margin-left: 3px;
    line-height: 12px;
    text-align: center;
    background: #fff;
}

.st-d {
    height: 12px;
    width: 11px;
    line-height: 10px;
}

.st-gap {
    width: 9px;
    height: 12px;
    background: #f2f2f2;
}

.st-pm {
    width: 11px;
    text-align: center;
    color: #222;
    font-size: 11px;
    font-weight: 700;
    line-height: 12px;
}

/* bottom tabs */
.tabs {
    height: 18px;
    flex: none;
    box-sizing: border-box;
    display: flex;
    align-items: flex-start;
    gap: 1px;
    padding: 1px 0 0 6px;
    background: linear-gradient(#8c8c8c, #c8c8c8);
}

.tab {
    width: 79px;
    height: 13px;
    box-sizing: border-box;
    background: linear-gradient(#bbb, #999);
    border-radius: 0 0 3px 3px;
    text-align: center;
    line-height: 13px;
    color: #444;
}

.tab.active {
    background: linear-gradient(#f4f4f4, #d4d4d4);
}
</style>
